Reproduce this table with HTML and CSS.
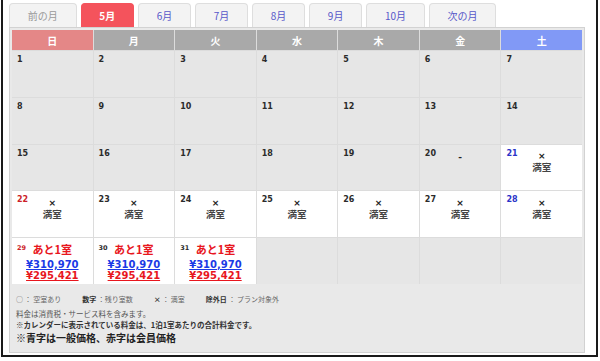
FILE: index.html
```
<!DOCTYPE html>
<html lang="ja">
<head>
<meta charset="utf-8">
<title>空室カレンダー</title>
<link rel="stylesheet" href="styles.css">
</head>
<body>
<div class="frame">
  <nav class="tabs">
    <a class="tab prev">前の月</a>
    <a class="tab active">5月</a>
    <a class="tab">6月</a>
    <a class="tab">7月</a>
    <a class="tab">8月</a>
    <a class="tab">9月</a>
    <a class="tab">10月</a>
    <a class="tab">次の月</a>
  </nav>
  <section class="cal">
    <div class="grid">
      <div class="hd sun">日</div>
      <div class="hd">月</div>
      <div class="hd">火</div>
      <div class="hd">水</div>
      <div class="hd">木</div>
      <div class="hd">金</div>
      <div class="hd sat">土</div>

      <div class="cell"><span class="num">1</span></div>
      <div class="cell"><span class="num">2</span></div>
      <div class="cell"><span class="num">3</span></div>
      <div class="cell"><span class="num">4</span></div>
      <div class="cell"><span class="num">5</span></div>
      <div class="cell"><span class="num">6</span></div>
      <div class="cell"><span class="num">7</span></div>

      <div class="cell"><span class="num">8</span></div>
      <div class="cell"><span class="num">9</span></div>
      <div class="cell"><span class="num">10</span></div>
      <div class="cell"><span class="num">11</span></div>
      <div class="cell"><span class="num">12</span></div>
      <div class="cell"><span class="num">13</span></div>
      <div class="cell"><span class="num">14</span></div>

      <div class="cell"><span class="num">15</span></div>
      <div class="cell"><span class="num">16</span></div>
      <div class="cell"><span class="num">17</span></div>
      <div class="cell"><span class="num">18</span></div>
      <div class="cell"><span class="num">19</span></div>
      <div class="cell"><span class="num">20</span><div class="body"><div class="mark dash">-</div></div></div>
      <div class="cell open"><span class="num sat">21</span><div class="body"><div class="mark">×</div><div class="full">満室</div></div></div>

      <div class="cell open"><span class="num sun">22</span><div class="body"><div class="mark">×</div><div class="full">満室</div></div></div>
      <div class="cell open"><span class="num">23</span><div class="body"><div class="mark">×</div><div class="full">満室</div></div></div>
      <div class="cell open"><span class="num">24</span><div class="body"><div class="mark">×</div><div class="full">満室</div></div></div>
      <div class="cell open"><span class="num">25</span><div class="body"><div class="mark">×</div><div class="full">満室</div></div></div>
      <div class="cell open"><span class="num">26</span><div class="body"><div class="mark">×</div><div class="full">満室</div></div></div>
      <div class="cell open"><span class="num">27</span><div class="body"><div class="mark">×</div><div class="full">満室</div></div></div>
      <div class="cell open"><span class="num sat">28</span><div class="body"><div class="mark">×</div><div class="full">満室</div></div></div>

      <div class="cell open"><span class="num small sun">29</span><div class="body"><div class="left">あと1室</div><a class="price general">¥310,970</a><a class="price member">¥295,421</a></div></div>
      <div class="cell open"><span class="num small">30</span><div class="body"><div class="left">あと1室</div><a class="price general">¥310,970</a><a class="price member">¥295,421</a></div></div>
      <div class="cell open"><span class="num small">31</span><div class="body"><div class="left">あと1室</div><a class="price general">¥310,970</a><a class="price member">¥295,421</a></div></div>
      <div class="cell"></div>
      <div class="cell"></div>
      <div class="cell"></div>
      <div class="cell"></div>
    </div>

    <div class="legend">
      <div class="keys">
        <span>○ ： 空室あり</span>
        <span><b>数字</b> ：残り室数</span>
        <span><b>×</b> ： 満室</span>
        <span><b>除外日</b> ： プラン対象外</span>
      </div>
      <p class="note">料金は消費税・サービス料を含みます。</p>
      <p class="note strong">※カレンダーに表示されている料金は、1泊1室あたりの合計料金です。</p>
      <p class="note big">※青字は一般価格、赤字は会員価格</p>
    </div>
  </section>
</div>
</body>
</html>
```
FILE: styles.css
```
body {
  margin: 0;
  background: #fff;
  font-family: "Noto Sans CJK JP", sans-serif;
}

.frame {
  margin-left: 1px;
  width: 597px;
  box-sizing: border-box;
  border: 2px solid #1a1a1a;
  border-top: 0;
  padding: 3px 0 2px 6px;
}

.tabs {
  display: flex;
  gap: 4px;
  height: 24px;
}

.tab {
  box-sizing: border-box;
  height: 24px;
  padding: 0 17.75px;
  border: 1px solid #dedede;
  border-bottom: 0;
  border-radius: 4px 4px 0 0;
  background: #f3f3f3;
  color: #5757c9;
  font-size: 10px;
  line-height: 23px;
  text-align: center;
  text-decoration: none;
  white-space: nowrap;
}

.tab.prev {
  color: #999;
}

.tab.active {
  background: #f4535c;
  border-color: #f4535c;
  color: #fff;
  font-weight: bold;
}

.cal {
  width: 576px;
  box-sizing: border-box;
  border: 1px solid #d2d2d2;
  background: #e9e9e9;
  padding: 2px 2px 7px;
}

.grid {
  display: grid;
  grid-template-columns: repeat(7, 1fr);
  grid-template-rows: 20px;
  grid-auto-rows: 45.8px;
  gap: 1px;
  background: #dcdcdc;
}

.hd {
  display: flex;
  align-items: center;
  justify-content: center;
  background: #a9a9a9;
  color: #fff;
  font-size: 10px;
  font-weight: bold;
}

.hd.sun {
  background: #e48787;
}

.hd.sat {
  background: #8199f6;
}

.cell {
  display: grid;
  grid-template-columns: 1fr auto 1fr;
  align-items: start;
  padding: 4px 5px 0;
  background: #e6e6e6;
}

.cell.open {
  background: #fff;
}

.num {
  grid-column: 1;
  grid-row: 1;
  justify-self: start;
  font: bold 8px/10px "DejaVu Sans", sans-serif;
  color: #2b2b2b;
}

.num.small {
  font-size: 6.5px;
  margin-top: 1px;
}

.num.sun {
  color: #cc1f2a;
}

.num.sat {
  color: #2a33c8;
}

.body {
  grid-column: 2;
  grid-row: 1;
  text-align: center;
  white-space: nowrap;
}

.mark {
  margin-top: 2.5px;
  font: bold 9px/11px "DejaVu Sans", sans-serif;
  color: #222;
}

.mark.dash {
  margin-top: 3px;
}

.full {
  font-size: 9.5px;
  line-height: 11px;
  font-weight: bold;
  color: #444;
}

.left {
  margin-top: 1px;
  font-size: 11px;
  line-height: 12px;
  font-weight: bold;
  color: #e8161d;
}

.price {
  display: block;
  font: bold 10px/11.5px "DejaVu Sans", sans-serif;
  text-decoration: underline;
}

.price.general {
  margin-top: 3.5px;
  color: #1b3ae6;
}

.price.member {
  color: #e8161d;
}

.legend {
  padding-left: 4px;
  color: #666;
}

.keys {
  display: flex;
  gap: 21px;
  margin-top: 10px;
  font-size: 7px;
  line-height: 11px;
  white-space: nowrap;
}

.keys b {
  color: #333;
}

.note {
  margin: 3px 0 0;
  font-size: 7.5px;
  line-height: 11px;
  color: #555;
}

.note.strong {
  margin-top: 0;
  font-weight: bold;
  color: #333;
}

.note.big {
  margin-top: 1.5px;
  font-size: 10px;
  line-height: 14px;
  font-weight: bold;
  color: #222;
}
```
